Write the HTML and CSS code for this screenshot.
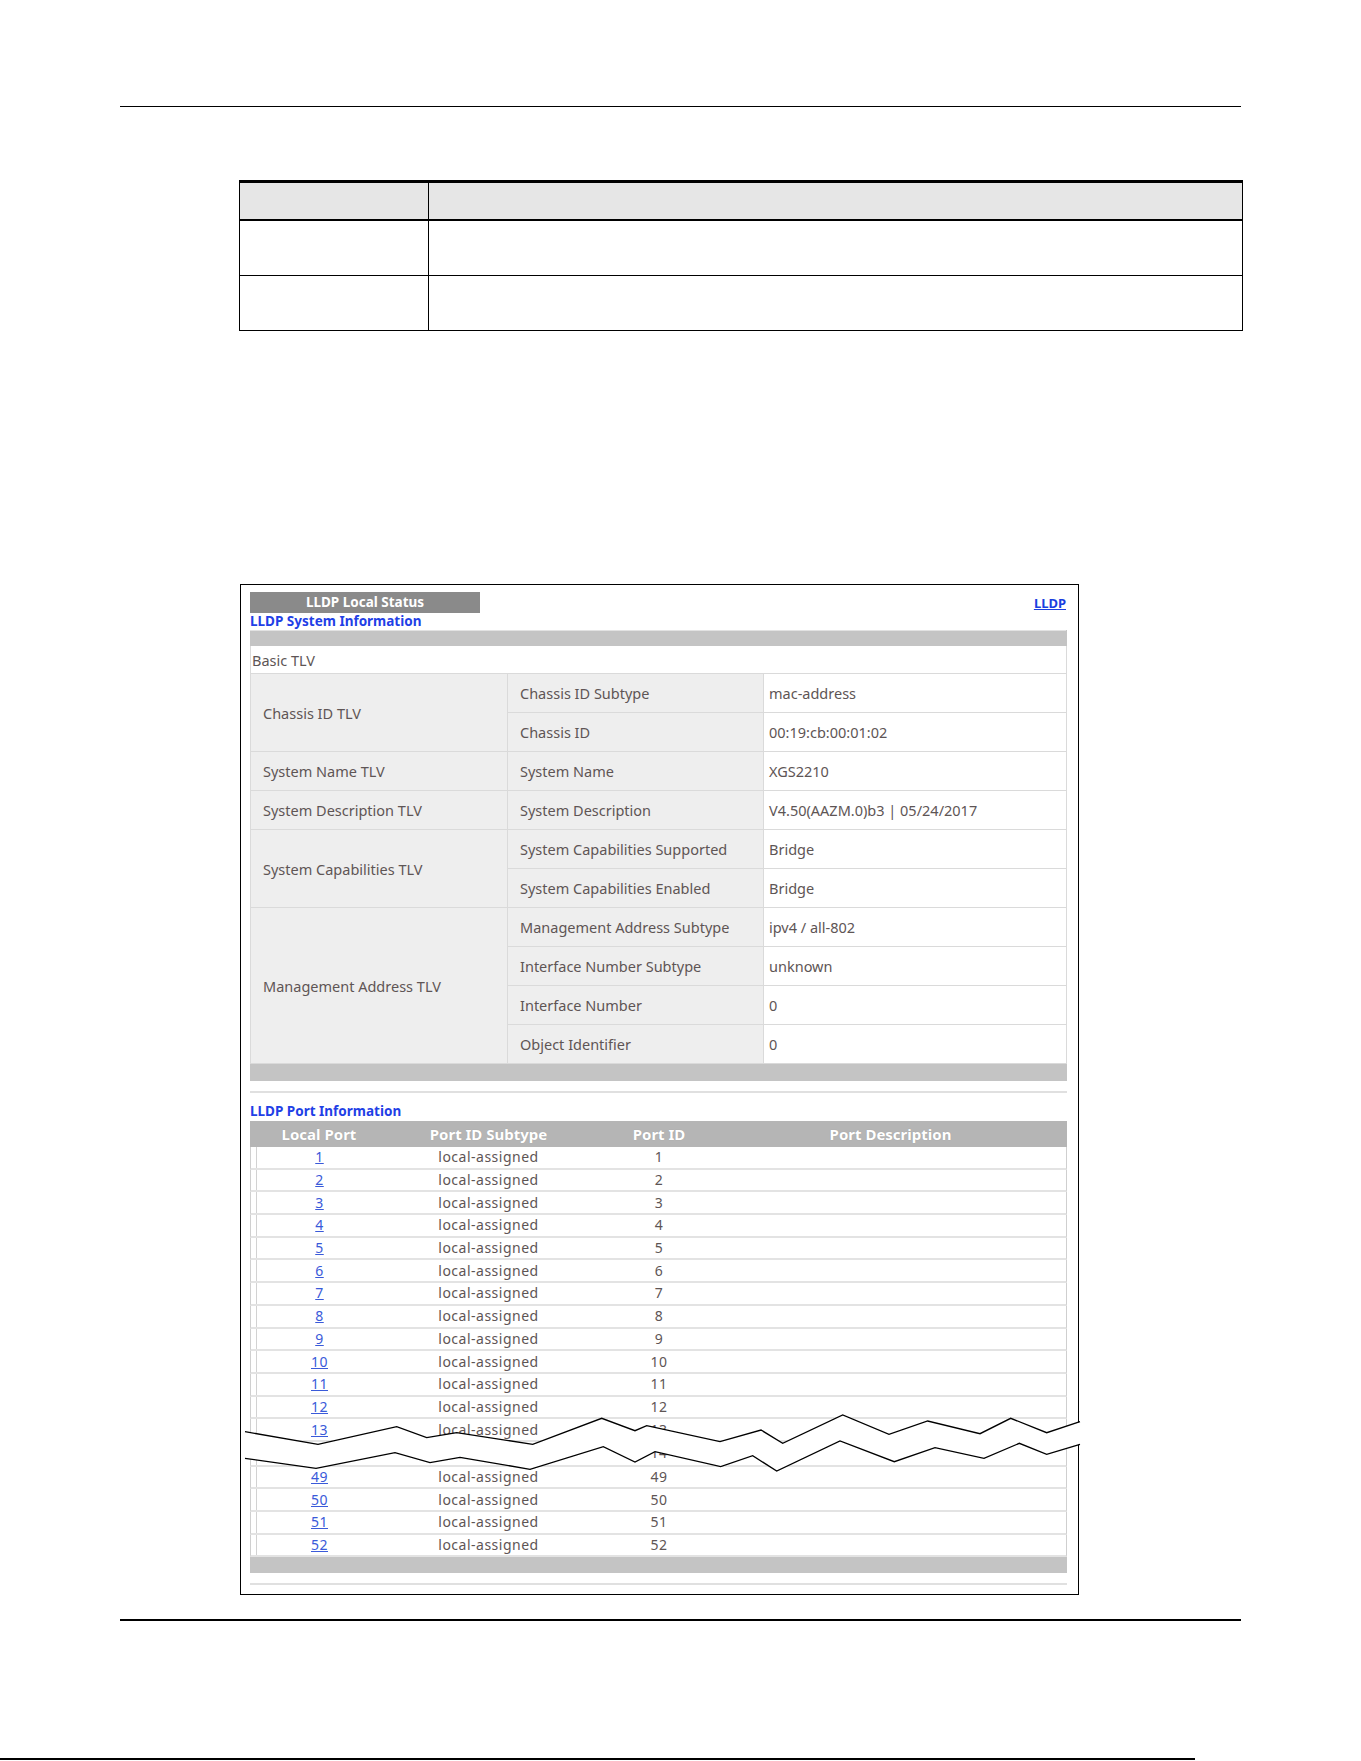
FILE: index.html
```html
<!DOCTYPE html>
<html lang="en">
<head>
  <meta charset="UTF-8">
  <title>LLDP Local Status</title>
  <link rel="stylesheet" href="styles.css">
</head>
<body>

  <div class="rule-top"></div>

  <!-- field / description table (empty cells) -->
  <table class="doc">
    <tr class="doc-head"><th class="doc-c1"></th><th></th></tr>
    <tr class="doc-row"><td></td><td></td></tr>
    <tr class="doc-row"><td></td><td></td></tr>
  </table>

  <!-- screenshot of the web configurator -->
  <div class="shot">
    <div class="shot-head">
      <div class="tab">LLDP Local Status</div>
      <a href="#" class="top-link">LLDP</a>
    </div>

    <div class="sec-title">LLDP System Information</div>
    <table class="sys">
      <colgroup><col class="w1"><col class="w2"><col class="w3"></colgroup>
      <tr class="bar"><td colspan="3"></td></tr>
      <tr class="basic"><td colspan="3">Basic TLV</td></tr>
      <tr><td class="k" rowspan="2">Chassis ID TLV</td><td class="k">Chassis ID Subtype</td><td class="v">mac-address</td></tr>
      <tr><td class="k">Chassis ID</td><td class="v">00:19:cb:00:01:02</td></tr>
      <tr><td class="k">System Name TLV</td><td class="k">System Name</td><td class="v">XGS2210</td></tr>
      <tr><td class="k">System Description TLV</td><td class="k">System Description</td><td class="v">V4.50(AAZM.0)b3 | 05/24/2017</td></tr>
      <tr><td class="k" rowspan="2">System Capabilities TLV</td><td class="k">System Capabilities Supported</td><td class="v">Bridge</td></tr>
      <tr><td class="k">System Capabilities Enabled</td><td class="v">Bridge</td></tr>
      <tr><td class="k" rowspan="4">Management Address TLV</td><td class="k">Management Address Subtype</td><td class="v">ipv4 / all-802</td></tr>
      <tr><td class="k">Interface Number Subtype</td><td class="v">unknown</td></tr>
      <tr><td class="k">Interface Number</td><td class="v">0</td></tr>
      <tr><td class="k">Object Identifier</td><td class="v">0</td></tr>
      <tr class="bar bar-end"><td colspan="3"></td></tr>
    </table>

    <div class="sep"></div>

    <div class="sec-title port-title">LLDP Port Information</div>
    <table class="ports">
      <colgroup><col class="p1"><col class="p2"><col class="p3"><col class="p4"></colgroup>
      <thead>
        <tr><th>Local Port</th><th>Port ID Subtype</th><th>Port ID</th><th class="desc">Port Description</th></tr>
      </thead>
      <tbody>
        <tr><td><a href="#">1</a></td><td>local-assigned</td><td>1</td><td></td></tr>
        <tr><td><a href="#">2</a></td><td>local-assigned</td><td>2</td><td></td></tr>
        <tr><td><a href="#">3</a></td><td>local-assigned</td><td>3</td><td></td></tr>
        <tr><td><a href="#">4</a></td><td>local-assigned</td><td>4</td><td></td></tr>
        <tr><td><a href="#">5</a></td><td>local-assigned</td><td>5</td><td></td></tr>
        <tr><td><a href="#">6</a></td><td>local-assigned</td><td>6</td><td></td></tr>
        <tr><td><a href="#">7</a></td><td>local-assigned</td><td>7</td><td></td></tr>
        <tr><td><a href="#">8</a></td><td>local-assigned</td><td>8</td><td></td></tr>
        <tr><td><a href="#">9</a></td><td>local-assigned</td><td>9</td><td></td></tr>
        <tr><td><a href="#">10</a></td><td>local-assigned</td><td>10</td><td></td></tr>
        <tr><td><a href="#">11</a></td><td>local-assigned</td><td>11</td><td></td></tr>
        <tr><td><a href="#">12</a></td><td>local-assigned</td><td>12</td><td></td></tr>
        <tr><td><a href="#">13</a></td><td>local-assigned</td><td>13</td><td></td></tr>
        <tr class="gap"><td><a href="#">14</a></td><td>local-assigned</td><td>14</td><td></td></tr>
        <tr><td><a href="#">49</a></td><td>local-assigned</td><td>49</td><td></td></tr>
        <tr><td><a href="#">50</a></td><td>local-assigned</td><td>50</td><td></td></tr>
        <tr><td><a href="#">51</a></td><td>local-assigned</td><td>51</td><td></td></tr>
        <tr><td><a href="#">52</a></td><td>local-assigned</td><td>52</td><td></td></tr>
        <tr class="bar"><td colspan="4"></td></tr>
      </tbody>
    </table>

    <div class="sep"></div>

    <!-- cut mark over the port list -->
    <svg class="cut" width="845" height="70" viewBox="0 0 845 70">
      <polygon fill="#fff" points="4,21.7 77,34.3 155.7,16.7 185.7,27.7 215.7,22.7 291.7,34.3 360.7,8.3 394,20.7 405.7,15.7 479,31.7 520,20 541.7,33.3 601.7,5 648,24.3 686.7,11 739,23.7 769.7,8.3 805.7,22.7 839,11.7 839,34.3 805.7,44.3 778.3,33.3 743,48.3 694,37.7 653.3,51.7 599,31 535.7,61 511.7,45.7 479.7,56.7 414,41.7 394,52 362.3,36.7 289,59.3 219,47.3 189,52.7 154,42.7 75,58.3 4,48.3"/>
      <polyline fill="none" stroke="#000" stroke-width="1.3" points="4,21.7 77,34.3 155.7,16.7 185.7,27.7 215.7,22.7 291.7,34.3 360.7,8.3 394,20.7 405.7,15.7 479,31.7 520,20 541.7,33.3 601.7,5 648,24.3 686.7,11 739,23.7 769.7,8.3 805.7,22.7 839,11.7"/>
      <polyline fill="none" stroke="#000" stroke-width="1.3" points="4,48.3 75,58.3 154,42.7 189,52.7 219,47.3 289,59.3 362.3,36.7 394,52 414,41.7 479.7,56.7 511.7,45.7 535.7,61 599,31 653.3,51.7 694,37.7 743,48.3 778.3,33.3 805.7,44.3 839,34.3"/>
    </svg>
  </div>

  <div class="rule-bottom"></div>
  <div class="edge"></div>

</body>
</html>
```

FILE: styles.css
```css
body {
  margin: 0;
  background: #fff;
  font-family: "Noto Sans", "DejaVu Sans", sans-serif;
  color: #5e5555;
}

.rule-top {
  margin: 106px 0 0 120px;
  width: 1121px;
  height: 1px;
  background: #000;
}

/* document table */
.doc {
  margin: 73px 0 0 239px;
  width: 1004px;
  border-spacing: 0;
  border-left: 1px solid #000;
}
.doc th, .doc td {
  padding: 0;
  border-right: 1px solid #000;
  border-bottom: 1px solid #000;
}
.doc th {
  background: #e6e6e6;
  border-top: 3px solid #000;
  border-bottom: 2px solid #000;
}
.doc-c1 { width: 188px; }
.doc-head { height: 41px; }
.doc-row { height: 55px; }

/* screenshot frame */
.shot {
  position: relative;
  box-sizing: border-box;
  width: 839px;
  margin: 253px 0 0 240px;
  padding: 7px 11px 9px 9px;
  border: 1px solid #000;
}
.shot-head {
  display: flex;
  justify-content: space-between;
  align-items: center;
}
.tab {
  width: 230px;
  height: 21px;
  line-height: 21px;
  background: #8a8a8a;
  color: #fff;
  font-weight: bold;
  font-size: 13.5px;
  text-align: center;
}
.top-link {
  margin-right: 1px;
  color: #1a3ee0;
  font-weight: bold;
  font-size: 13px;
}
.sec-title {
  color: #1f40e6;
  font-weight: bold;
  font-size: 13.5px;
  line-height: 17px;
}
.port-title {
  margin-top: 8px;
  line-height: 20px;
}
.sep {
  margin-top: 10px;
  height: 2px;
  background: #e0e0e0;
}

/* system information */
.sys {
  width: 816px;
  border-collapse: collapse;
  table-layout: fixed;
  font-size: 14.5px;
}
.sys .w1 { width: 257px; }
.sys .w2 { width: 256px; }
.sys .w3 { width: 303px; }
.sys td {
  padding: 0;
  border: 1px solid #dadada;
  height: 38px;
  vertical-align: middle;
}
.sys .bar td {
  height: 14px;
  background: #c4c4c4;
  border-color: #c4c4c4;
  border-top: 1px solid #e2e2e2;
}
.sys .bar-end td { height: 16px; border-top-color: #dadada; }
.sys .basic td {
  height: 27px;
  padding-left: 1px;
}
.sys .k {
  background: #eeeeee;
  padding-left: 12px;
}
.sys .v {
  padding-left: 5px;
}

/* port information */
.ports {
  width: 817px;
  border-spacing: 0;
  table-layout: fixed;
}
.ports .p1 { width: 138px; }
.ports .p2 { width: 201px; }
.ports .p3 { width: 140px; }
.ports .p4 { width: 338px; }
.ports th {
  height: 26px;
  padding: 0;
  background: #b5b5b5;
  color: #fff;
  font-size: 15px;
  font-weight: bold;
  text-shadow: 0 0 1px rgba(0, 0, 0, 0.15);
}
.ports th.desc { padding-right: 15px; }
.ports tbody tr { height: 22.7px; }
.ports tbody tr.gap { height: 24.7px; }
.ports td {
  padding: 0;
  text-align: center;
  font-size: 14px;
  letter-spacing: 0.5px;
  line-height: 18px;
  border-bottom: 2px solid #e3e3e3;
}
.ports td:first-child {
  border-left: 1px solid #cfcfcf;
  background: linear-gradient(to right, transparent 5px, #d2d2d2 5px, #d2d2d2 6px, transparent 6px);
}
.ports td:last-child { border-right: 1px solid #cfcfcf; }
.ports td a { color: #3a5ad9; }
.ports tbody tr.bar { height: 16px; }
.ports .bar td {
  height: 16px;
  line-height: 0;
  background: #c4c4c4;
  border: none;
}

.cut {
  position: absolute;
  left: 0;
  top: 825px;
}

.rule-bottom {
  margin: 24px 0 0 120px;
  width: 1121px;
  height: 2px;
  background: #000;
}
.edge {
  margin-top: 137px;
  width: 1195px;
  height: 2px;
  background: #000;
}
```
